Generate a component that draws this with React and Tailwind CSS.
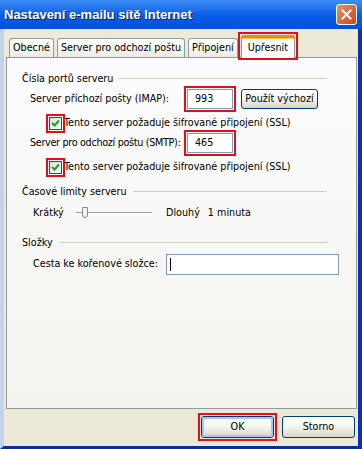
import { useState } from 'react';

const font = { fontFamily: '"DejaVu Sans Condensed", "Liberation Sans", Arial, sans-serif' };
const titleFont = { fontFamily: '"Liberation Sans", Arial, sans-serif' };

function RedBox({ children, className = '' }) {
  return (
    <div className={`relative ${className}`}>
      {children}
      <div className="pointer-events-none absolute -inset-[3px] border-2 border-[#e0101a]" />
    </div>
  );
}

function Tab({ label, active }) {
  if (active) {
    return (
      <div className="relative z-10 -mb-px flex h-[23px] items-center rounded-t-[3px] border border-b-0 border-[#919b9c] bg-[#fcfcfe] px-[6px] pt-[2px]">
        <div className="absolute -top-px -left-px -right-px h-[3px] rounded-t-[3px] bg-[#e68b2c]" />
        <div className="absolute top-[2px] left-0 right-0 h-px bg-[#ffc73c]" />
        {label}
      </div>
    );
  }
  return (
    <div className="flex h-[19px] items-center whitespace-nowrap rounded-t-[3px] border border-b-0 border-[#919b9c] bg-gradient-to-b from-white to-[#ecebe6] px-[3px]">
      {label}
    </div>
  );
}

function Checkbox() {
  return (
    <div className="flex h-[13px] w-[13px] items-center justify-center border border-[#1c5180] bg-gradient-to-br from-[#dcdcd7] to-white">
      <svg width="9" height="9" viewBox="0 0 9 9">
        <path d="M1 4 L3.5 6.5 L8 1.5" fill="none" stroke="#21a121" strokeWidth="2" />
      </svg>
    </div>
  );
}

function GroupHeader({ label }) {
  return (
    <div className="flex h-[13px] items-center gap-[6px] pr-[29px] leading-[13px]">
      <span className="whitespace-nowrap">{label}</span>
      <div className="h-px flex-1 bg-[#d0d0bf]" />
    </div>
  );
}

function XpButton({ children, def, className = '' }) {
  return (
    <div
      className={`flex items-center justify-center rounded-[3px] border border-[#003c74] bg-gradient-to-b from-white via-[#f5f4ef] to-[#d8d4c8] ${className}`}
    >
      <div className={`flex h-full w-full items-center justify-center whitespace-nowrap rounded-[2px] ${def ? 'border-2 border-[#a9c4f2]' : ''}`}>
        {children}
      </div>
    </div>
  );
}

function TextBox({ value, className = '' }) {
  return (
    <div className={`flex items-center border border-[#7f9db9] bg-white px-[7px] ${className}`}>
      {value}
    </div>
  );
}

export default function App() {
  const [path] = useState('');

  return (
    <div className="flex h-[449px] w-[362px] flex-col bg-[#0a3fd8] text-[10.7px] text-black" style={font}>
      {/* Title bar */}
      <div className="flex h-[29px] shrink-0 items-center justify-between bg-gradient-to-b from-[#3d8df5] via-[#0a5fe6] to-[#0650d8] pl-[4px] pr-[5px]">
        <span className="text-[13px] font-bold text-white [text-shadow:1px_1px_0_#0a1e6a]" style={titleFont}>
          Nastavení e-mailu sítě Internet
        </span>
        <div className="flex h-[21px] w-[21px] items-center justify-center rounded-[3px] border border-white bg-gradient-to-br from-[#e8916c] to-[#c8431c]">
          <svg width="11" height="11" viewBox="0 0 11 11">
            <path d="M1.5 1.5 L9.5 9.5 M9.5 1.5 L1.5 9.5" stroke="white" strokeWidth="2" strokeLinecap="square" />
          </svg>
        </div>
      </div>

      {/* Body */}
      <div className="flex flex-1 flex-col border-b-[3px] border-l-[4px] border-r-[4px] border-b-[#0b2ca0] border-l-[#c4d2ea] border-r-[#0a2fb8] bg-[#ece9d8] pt-[6px]">
        <div className="ml-[2px] mr-[1px] flex flex-col">
          {/* Tabs */}
          <div className="flex items-end gap-[3px] pl-[3px]">
            <Tab label="Obecné" />
            <Tab label="Server pro odchozí poštu" />
            <Tab label="Připojení" />
            <RedBox>
              <Tab label="Upřesnit" active />
            </RedBox>
          </div>

          {/* Panel */}
          <div className="flex h-[352px] flex-col border border-[#919b9c] bg-gradient-to-b from-[#fcfcfe] to-[#f4f3ee] pl-[15px] pt-[14px]">
            <GroupHeader label="Čísla portů serveru" />

            <div className="mt-[4px] flex h-[20px] items-center">
              <span className="w-[165px] whitespace-nowrap pl-[8px]">Server příchozí pošty (IMAP):</span>
              <RedBox>
                <TextBox value="993" className="h-[20px] w-[46px]" />
              </RedBox>
              <XpButton className="ml-[8px] h-[20px] w-[77px]">Použít výchozí</XpButton>
            </div>

            <div className="mt-[8px] flex h-[13px] items-center pl-[27px]">
              <RedBox>
                <Checkbox />
              </RedBox>
              <span className="ml-[2px] whitespace-nowrap">Tento server požaduje šifrované připojení (SSL)</span>
            </div>

            <div className="mt-[3px] flex h-[20px] items-center">
              <span className="w-[165px] whitespace-nowrap pl-[8px] tracking-[-0.3px]">Server pro odchozí poštu (SMTP):</span>
              <RedBox>
                <TextBox value="465" className="h-[20px] w-[46px]" />
              </RedBox>
            </div>

            <div className="mt-[8px] flex h-[13px] items-center pl-[27px]">
              <RedBox>
                <Checkbox />
              </RedBox>
              <span className="ml-[2px] whitespace-nowrap">Tento server požaduje šifrované připojení (SSL)</span>
            </div>

            <div className="mt-[11px]">
              <GroupHeader label="Časové limity serveru" />
            </div>

            <div className="mt-[5px] flex h-[20px] items-center pl-[11px]">
              <span className="w-[43px]">Krátký</span>
              <div className="relative flex h-[14px] w-[76px] items-center">
                <div className="h-[2px] w-full border-t border-[#9d9c99] bg-white" />
                <div className="absolute left-[6px] top-[1px] h-[11px] w-[6px] rounded-b-[3px] border border-[#8a8a8a] bg-[#f4f3ee]" />
              </div>
              <span className="ml-[14px]">Dlouhý</span>
              <span className="ml-[8px]">1 minuta</span>
            </div>

            <div className="mt-[13px]">
              <GroupHeader label="Složky" />
            </div>

            <div className="mt-[5px] flex h-[20px] items-center pl-[11px]">
              <span className="w-[133px] whitespace-nowrap">Cesta ke kořenové složce:</span>
              <div className="flex h-[21px] w-[173px] items-center border border-[#7f9db9] bg-white pl-[3px]">
                <div className="h-[13px] w-px bg-black" />
                {path}
              </div>
            </div>
          </div>

          {/* Buttons */}
          <div className="mt-[7px] flex justify-end gap-[8px] pr-[2px]">
            <RedBox>
              <XpButton def className="h-[22px] w-[73px]">OK</XpButton>
            </RedBox>
            <XpButton className="h-[22px] w-[73px]">Storno</XpButton>
          </div>
        </div>
      </div>
    </div>
  );
}
